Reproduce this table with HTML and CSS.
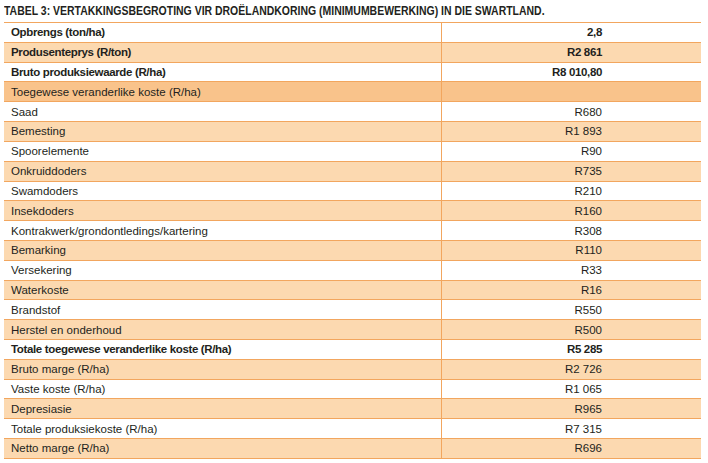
FILE: index.html
```html
<!DOCTYPE html>
<html>
<head>
<meta charset="utf-8">
<link rel="stylesheet" href="styles.css">
</head>
<body>
<div class="page">
  <h1 class="title">TABEL 3: VERTAKKINGSBEGROTING VIR DROËLANDKORING (MINIMUMBEWERKING) IN DIE SWARTLAND.</h1>
  <div class="table">
    <div class="row bold"><div class="label">Opbrengs (ton/ha)</div><div class="value">2,8</div></div>
    <div class="row bold alt"><div class="label">Produsenteprys (R/ton)</div><div class="value">R2 861</div></div>
    <div class="row bold"><div class="label">Bruto produksiewaarde (R/ha)</div><div class="value">R8 010,80</div></div>
    <div class="row head"><div class="label">Toegewese veranderlike koste (R/ha)</div><div class="value"></div></div>
    <div class="row"><div class="label">Saad</div><div class="value">R680</div></div>
    <div class="row alt"><div class="label">Bemesting</div><div class="value">R1 893</div></div>
    <div class="row"><div class="label">Spoorelemente</div><div class="value">R90</div></div>
    <div class="row alt"><div class="label">Onkruiddoders</div><div class="value">R735</div></div>
    <div class="row"><div class="label">Swamdoders</div><div class="value">R210</div></div>
    <div class="row alt"><div class="label">Insekdoders</div><div class="value">R160</div></div>
    <div class="row"><div class="label">Kontrakwerk/grondontledings/kartering</div><div class="value">R308</div></div>
    <div class="row alt"><div class="label">Bemarking</div><div class="value">R110</div></div>
    <div class="row"><div class="label">Versekering</div><div class="value">R33</div></div>
    <div class="row alt"><div class="label">Waterkoste</div><div class="value">R16</div></div>
    <div class="row"><div class="label">Brandstof</div><div class="value">R550</div></div>
    <div class="row alt"><div class="label">Herstel en onderhoud</div><div class="value">R500</div></div>
    <div class="row bold"><div class="label">Totale toegewese veranderlike koste (R/ha)</div><div class="value">R5 285</div></div>
    <div class="row alt"><div class="label">Bruto marge (R/ha)</div><div class="value">R2 726</div></div>
    <div class="row"><div class="label">Vaste koste (R/ha)</div><div class="value">R1 065</div></div>
    <div class="row alt"><div class="label">Depresiasie</div><div class="value">R965</div></div>
    <div class="row"><div class="label">Totale produksiekoste (R/ha)</div><div class="value">R7 315</div></div>
    <div class="row alt last"><div class="label">Netto marge (R/ha)</div><div class="value">R696</div></div>
  </div>
</div>
</body>
</html>
```

FILE: styles.css
```css
html, body {
  margin: 0;
  padding: 0;
  background: #ffffff;
}

.page {
  padding: 4px 7px 0 4px;
  font-family: "Liberation Sans", Arial, sans-serif;
  color: #231f20;
}

.title {
  margin: 0 0 4px 0;
  font-family: "Liberation Sans Narrow", "Liberation Sans", sans-serif;
  font-size: 12.5px;
  line-height: 14px;
  font-weight: bold;
  white-space: nowrap;
  transform: scaleX(0.837);
  transform-origin: left center;
}

.table {
  display: flex;
  flex-direction: column;
}

.row {
  display: grid;
  grid-template-columns: 438px 1fr;
  height: 19.82px;
  box-sizing: border-box;
  border-top: 1px solid #f2a65e;
  font-size: 11.5px;
  align-items: center;
}

.row.last {
  border-bottom: 1px solid #f2a65e;
  height: 20.82px;
}

.row.alt {
  background: #fcd9b0;
}

.row.head {
  background: #f9c38b;
}

.row.bold {
  font-weight: bold;
  letter-spacing: -0.35px;
}

.label {
  padding-left: 7px;
  height: 100%;
  display: flex;
  align-items: center;
  border-right: 1px solid #f2a65e;
  box-sizing: border-box;
}

.value {
  text-align: right;
  padding-right: 99px;
}
```
